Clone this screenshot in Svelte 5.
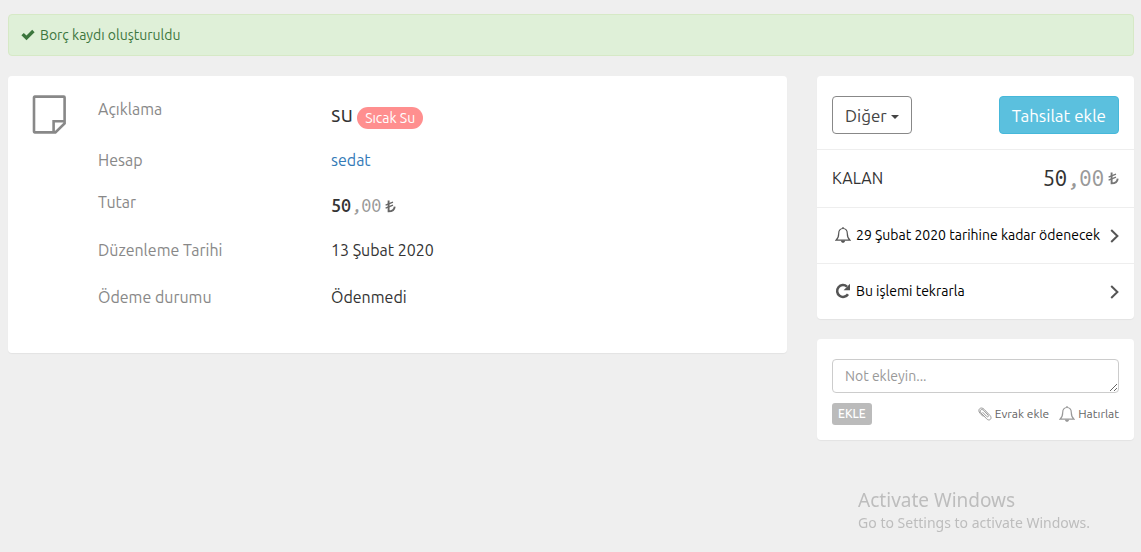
<script>
  let note = $state('');
  const label = 'Sıcak Su';
</script>

{#snippet lira()}
  <svg class="lira" width="11" height="13" viewBox="0 0 11 13" role="img" aria-label="TL">
    <path class="stem" d="M3.6 0.4V11.4C7.2 11.4 9.4 9.6 9.7 6.6" />
    <path d="M0.6 5.2L8 2.1M0.6 8.2L8 5.1" />
  </svg>
{/snippet}

{#snippet bell()}
  <svg class="bell" width="16" height="16" viewBox="0 0 16 16" aria-hidden="true">
    <path d="M8 0V1.5M1 13.2C3 11.6 3.7 9.6 3.7 6.6C3.7 3.5 5.3 1.5 8 1.5S12.3 3.5 12.3 6.6C12.3 9.6 13 11.6 15 13.2Z" />
    <path class="clapper" d="M5.9 13.5H10.1C9.9 16.6 6.1 16.6 5.9 13.5Z" />
  </svg>
{/snippet}

{#snippet chevron()}
  <svg class="chevron" width="9" height="14" viewBox="0 0 9 14" aria-hidden="true"><path d="M1.2 1L7.4 7L1.2 13" /></svg>
{/snippet}

<main>
  <div class="alert" role="status">
    <svg width="14" height="14" viewBox="0 0 14 14" aria-hidden="true">
      <path d="M0.4 7.3L2.8 4.9L5.5 7.5L11.2 1.8L13.6 4.2L5.5 12.2Z" />
    </svg>
    <span>Borç kaydı oluşturuldu</span>
  </div>

  <div class="columns">
    <section class="card details">
      <svg class="sheet" width="34" height="39" viewBox="0 0 34 39" aria-hidden="true">
        <path d="M2.8 1.6H31.8Q32.6 1.6 32.6 2.4V28.4L23.4 37.4H2.8Q2 37.4 2 36.6V2.4Q2 1.6 2.8 1.6ZM21.6 37V26.3H32" />
      </svg>
      <dl>
        <div class="row title">
          <dt>Açıklama</dt>
          <dd><span class="name">su</span><span class="badge">{label}</span></dd>
        </div>
        <div class="row">
          <dt>Hesap</dt>
          <dd><a href="#sedat">sedat</a></dd>
        </div>
        <div class="row amount">
          <dt>Tutar</dt>
          <dd class="money"><b>50</b><span>,00</span>{@render lira()}</dd>
        </div>
        <div class="row spaced">
          <dt>Düzenleme Tarihi</dt>
          <dd>13 Şubat 2020</dd>
        </div>
        <div class="row spaced">
          <dt>Ödeme durumu</dt>
          <dd>Ödenmedi</dd>
        </div>
      </dl>
    </section>

    <aside>
      <section class="card">
        <div class="actions">
          <button type="button" class="btn other">Diğer<i></i></button>
          <button type="button" class="btn collect">Tahsilat ekle</button>
        </div>
        <div class="remaining">
          <span>KALAN</span>
          <span class="money large"><b>50</b><span>,00</span>{@render lira()}</span>
        </div>
        <a class="item" href="#vade">
          {@render bell()}
          <span>29 Şubat 2020 tarihine kadar ödenecek</span>
          {@render chevron()}
        </a>
        <a class="item" href="#tekrar">
          <svg class="repeat" width="16" height="16" viewBox="0 0 16 16" aria-hidden="true">
            <path class="arc" d="M13 11.2A5.9 5.9 0 1 1 12 3.6" />
            <path d="M15 0.8V7.2H8.6Z" />
          </svg>
          <span>Bu işlemi tekrarla</span>
          {@render chevron()}
        </a>
      </section>

      <form class="card note" onsubmit={(e) => e.preventDefault()}>
        <textarea rows="1" aria-label="Not" placeholder="Not ekleyin..." bind:value={note}></textarea>
        <div class="tools">
          <button type="submit" class="add">EKLE</button>
          <a href="#evrak">
            <svg class="clip" width="14" height="14" viewBox="0 0 14 14" aria-hidden="true">
              <path d="M4.6 5.2L8.6 9.4C9.8 10.6 11.2 9.2 10 8L5.6 3.4C3.4 1.2 0.9 3.6 3 5.9L8.6 11.8C11.4 14.8 14.8 11.4 12 8.5L6.2 2.4C2.8 -1.1 -1.2 2.8 2.1 6.3L5.2 9.6" />
            </svg>Evrak ekle
          </a>
          <a href="#hatirlat">{@render bell()}Hatırlat</a>
        </div>
      </form>
    </aside>
  </div>
</main>

<div class="watermark">
  <strong>Activate Windows</strong>
  <span>Go to Settings to activate Windows.</span>
</div>

<style>
  :global(body) {
    background: #efefef;
    color: #333;
    font: 16px/22px Ubuntu, "Noto Sans", sans-serif;
  }
  * { box-sizing: border-box; }
  svg { flex: none; }
  path { fill: none; stroke: currentColor; }
  a { color: #337ab7; text-decoration: none; }
  button, textarea { font-family: inherit; }
  main { padding: 14px 7px 14px 8px; }

  .alert {
    display: flex;
    align-items: center;
    gap: 5px;
    margin-bottom: 20px;
    padding: 10px 12px;
    border: 1px solid #d6e9c6;
    border-radius: 4px;
    background: #dff0d8;
    color: #3c763d;
    font-size: 14px;
    line-height: 20px;
  }
  .alert path { fill: currentColor; stroke: none; }

  .columns {
    display: grid;
    grid-template-columns: minmax(0, 779fr) minmax(0, 317fr);
    align-items: start;
    gap: 30px;
  }
  .card {
    border-radius: 4px;
    background: #fff;
    box-shadow: 0 1px 1px rgba(0, 0, 0, 0.05);
  }

  .details { display: flex; padding: 12px 0 30px; }
  .sheet { margin: 7px 32px 0 24px; color: #888; }
  .sheet path { stroke-width: 2.6; }
  dl { flex: 1; margin: 0; }
  .row {
    display: grid;
    grid-template-columns: minmax(0, 233fr) minmax(0, 456fr);
    padding: 10px 0;
  }
  .spaced { margin-bottom: 5px; }
  dt { color: #888; }
  dd { margin: 0; }
  .title dd { display: flex; align-items: center; gap: 4px; height: 31px; }
  .name { font-size: 22px; line-height: 28px; }
  .badge {
    margin-top: 8px;
    padding: 0 8px;
    border-radius: 11px;
    background: #ff8f8f;
    color: #fff;
    font-size: 14px;
    line-height: 22px;
  }

  .money {
    display: flex;
    align-items: center;
    font-family: "Ubuntu Mono", "Liberation Mono", monospace;
    font-size: 18px;
    line-height: 28px;
  }
  .money b { font-weight: 500; }
  .money span { color: #999; }
  .lira { margin: 2px 0 0 4px; color: #666; }
  .lira path { stroke-width: 1.3; }
  .lira .stem { stroke-width: 1.9; }
  .large { font-size: 22px; }
  .large b { font-weight: 400; }
  .large .lira { color: #777; }

  .actions, .remaining, .item { display: flex; align-items: center; padding: 0 15px; }
  .actions { justify-content: space-between; padding: 20px 15px 15px; }
  .btn {
    height: 38px;
    padding: 1px 12px 0;
    border: 1px solid #888;
    border-radius: 4px;
    background: #fff;
    color: #444;
    font-size: 17px;
    line-height: 24px;
    white-space: nowrap;
  }
  .btn i {
    display: inline-block;
    margin-left: 4px;
    border: 4px solid transparent;
    border-top-color: currentColor;
    border-bottom: 0;
    vertical-align: middle;
  }
  .collect { border-color: #46b8da; background: #5bc0de; color: #fff; }
  .remaining { justify-content: space-between; min-height: 58px; padding-bottom: 2px; border-top: 1px solid #eee; }
  .item {
    gap: 5px;
    min-height: 56px;
    padding: 0 15px 2px 18px;
    border-top: 1px solid #eee;
    color: #000;
    font-size: 14px;
    line-height: 20px;
  }
  .item span { flex: 1; white-space: nowrap; }
  .item svg { color: #555; }
  .bell path { stroke-width: 1.2; }
  .bell .clapper { fill: currentColor; stroke: none; }
  .repeat path { fill: currentColor; stroke: none; }
  .repeat .arc { fill: none; stroke: currentColor; stroke-width: 2.5; }
  .item .chevron { margin-top: 2px; }
  .chevron path { stroke-width: 2; }

  .note { margin-top: 20px; padding: 20px 15px 15px; }
  textarea {
    display: block;
    width: 100%;
    height: 34px;
    padding: 6px 12px;
    border: 1px solid #ccc;
    border-radius: 4px;
    color: #555;
    font-size: 14px;
    line-height: 20px;
    resize: vertical;
    overflow: hidden;
  }
  textarea::placeholder { color: #999; }
  .tools { display: flex; align-items: center; gap: 10px; margin-top: 10px; }
  .add {
    margin-right: auto;
    height: 22px;
    padding: 0 6px;
    border: 0;
    border-radius: 3px;
    background: #bbb;
    color: #fff;
    font-size: 12px;
    font-weight: 500;
    line-height: 18px;
  }
  .tools a { display: flex; align-items: center; gap: 3px; color: #666; font-size: 12px; line-height: 18px; }
  .tools svg { color: #999; }

  .watermark {
    position: fixed;
    right: 51px;
    bottom: 19px;
    color: #bdbdbd;
    font-family: "Segoe UI", "Noto Sans", sans-serif;
    font-size: 14px;
    line-height: 20px;
    pointer-events: none;
  }
  .watermark strong, .watermark span { display: block; }
  .watermark strong { font-size: 19px; font-weight: 400; line-height: 26px; }
</style>
